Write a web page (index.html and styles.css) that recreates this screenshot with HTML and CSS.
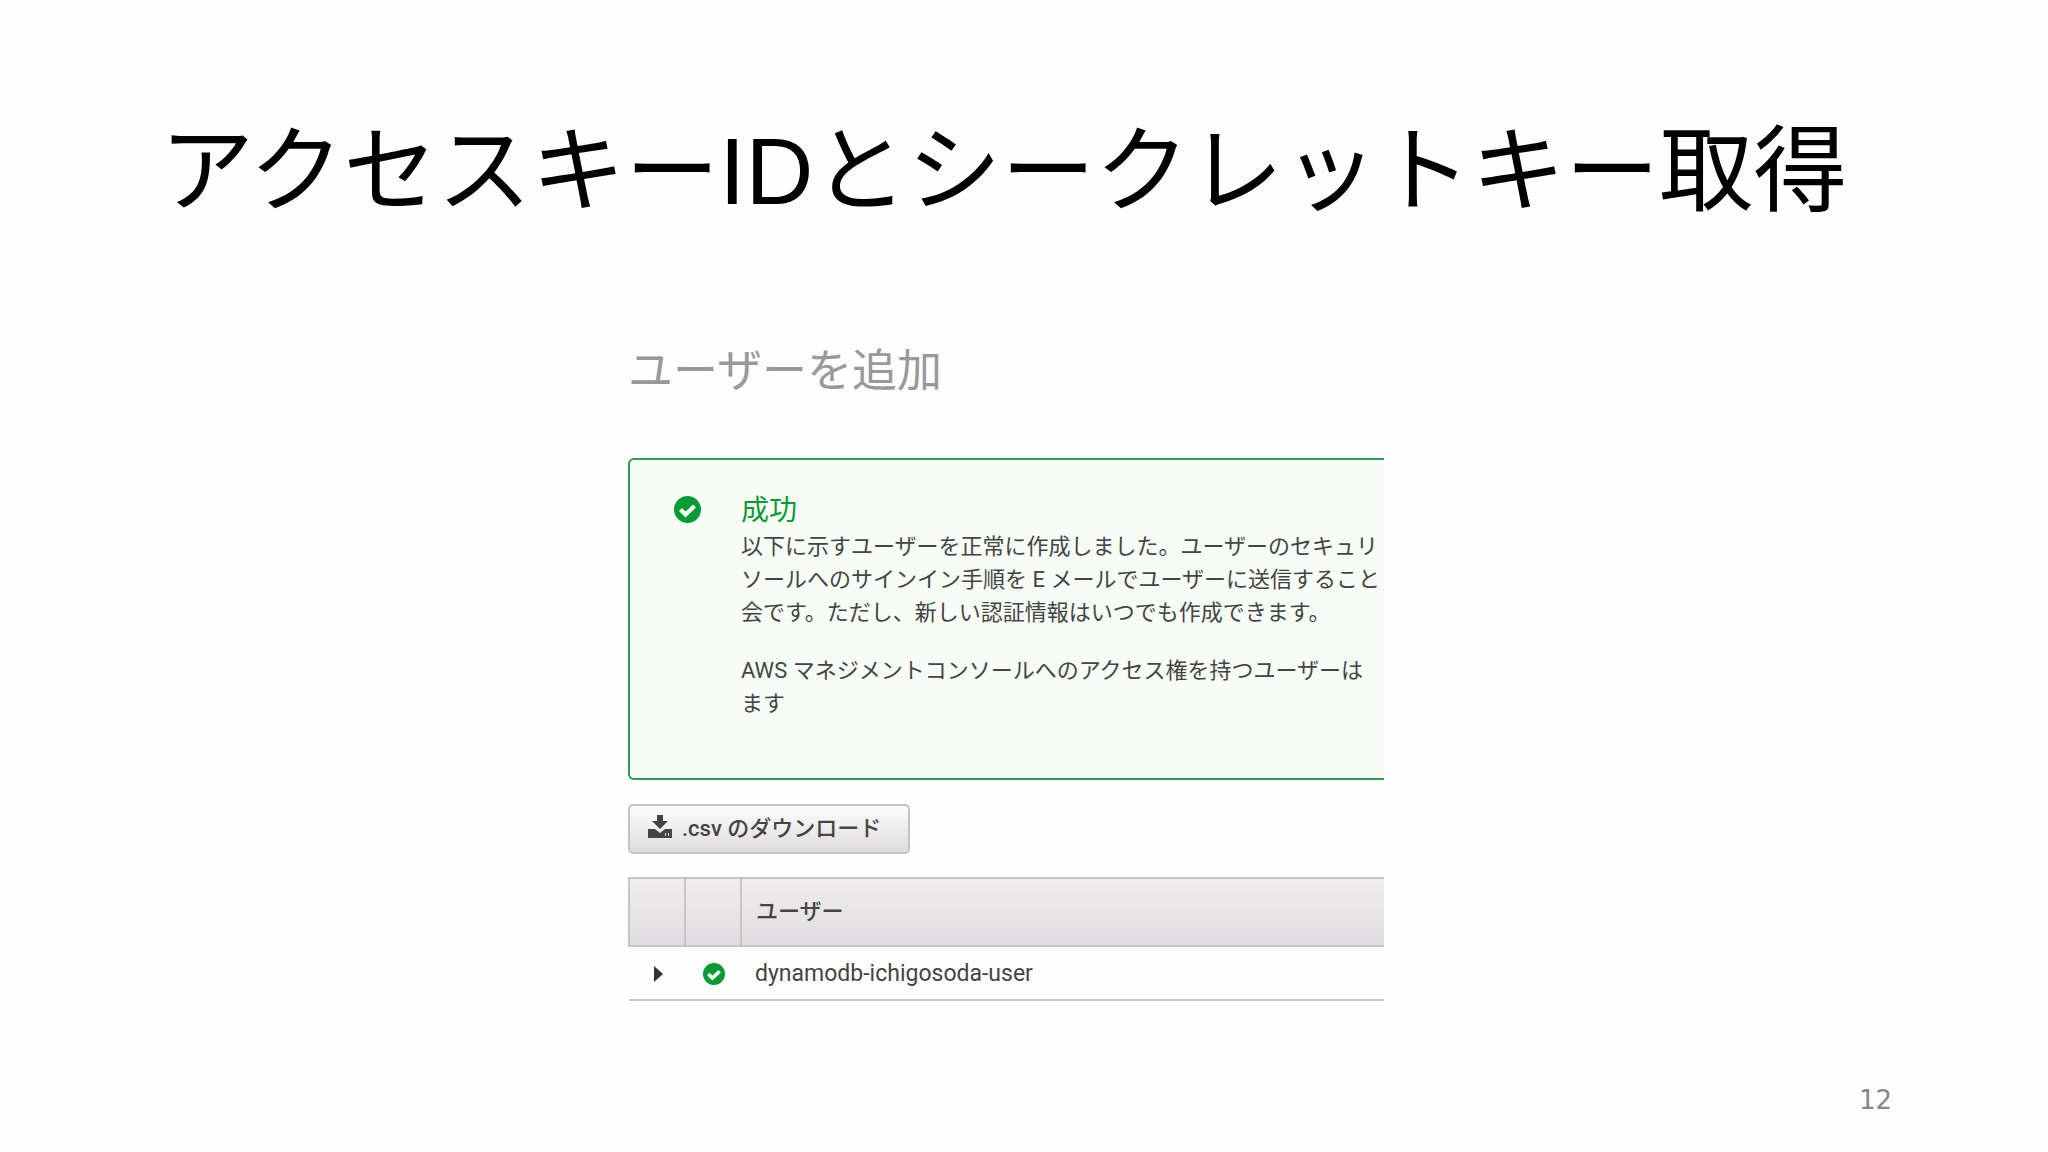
FILE: index.html
```html
<!DOCTYPE html>
<html lang="ja">
<head>
    <meta charset="UTF-8">
    <title>アクセスキーIDとシークレットキー取得</title>
    <link rel="stylesheet" href="styles.css">
</head>
<body>
    <h1>アクセスキーIDとシークレットキー取得</h1>
    <main class="content">
        <div class="capture">
            <h2>ユーザーを追加</h2>
            <section class="alert">
                <svg class="alertIcon" viewBox="0 0 27 27" aria-hidden="true">
                    <circle cx="13.5" cy="13.5" r="13.5" fill="#079b35"/>
                    <path d="M6.5 13.5l5 5L20.5 10" fill="none" stroke="#fff" stroke-width="4.2"/>
                </svg>
                <div class="alertText">
                    <h3>成功</h3>
                    <p>以下に示すユーザーを正常に作成しました。ユーザーのセキュリ<br>ソールへのサインイン手順を E メールでユーザーに送信すること<br>会です。ただし、新しい認証情報はいつでも作成できます。</p>
                    <p>AWS マネジメントコンソールへのアクセス権を持つユーザーは<br>ます</p>
                </div>
            </section>
            <button type="button" class="download">
                <svg class="downloadIcon" viewBox="0 0 24 23" aria-hidden="true">
                    <path d="M9 0h6v6h5l-8 8-8-8h5z" fill="#444"/>
                    <path d="M0 14h7l5 4 5-4h7v9H0z" fill="#444"/>
                    <path d="M17 18h1v3h-1zM20 18h1v3h-1z" fill="#ddd"/>
                </svg>
                <span>.csv のダウンロード</span>
            </button>
            <table class="users">
                <thead>
                    <tr>
                        <th class="toggle"></th>
                        <th class="status"></th>
                        <th>ユーザー</th>
                    </tr>
                </thead>
                <tbody>
                    <tr>
                        <td class="toggle">
                            <svg class="arrow" viewBox="0 0 9 16" aria-hidden="true"><path d="M0 0l9 8-9 8z" fill="#333"/></svg>
                        </td>
                        <td class="status">
                            <svg class="statusIcon" viewBox="0 0 27 27" aria-hidden="true">
                                <circle cx="13.5" cy="13.5" r="13.5" fill="#079b35"/>
                                <path d="M6.5 13.5l5 5L20.5 10" fill="none" stroke="#fff" stroke-width="4.2"/>
                            </svg>
                        </td>
                        <td>dynamodb-ichigosoda-user</td>
                    </tr>
                </tbody>
            </table>
        </div>
    </main>
    <footer>12</footer>
</body>
</html>
```

FILE: styles.css
```css
* {
    box-sizing: border-box;
}
body {
    margin: 0;
    min-height: 100vh;
    display: flex;
    flex-direction: column;
    background: #fefefe;
    color: #444;
    font-family: Roboto, "Noto Sans CJK JP", sans-serif;
    overflow: hidden;
}
h1, h2, h3, p {
    margin: 0;
    font-weight: normal;
}
h1 {
    padding: 104px 0 0 160px;
    font-family: "Liberation Sans", "Noto Sans CJK JP", sans-serif;
    font-size: 94px;
    line-height: 136px;
    color: #000;
    white-space: nowrap;
}
/* the capture sits a little left of the middle */
.content {
    display: grid;
    grid-template-columns: 628fr 756fr 664fr;
    padding-top: 100px;
}
.capture {
    grid-column: 2;
    min-width: 0;
    overflow: hidden;
}
h2 {
    font-size: 45px;
    line-height: 64px;
    color: #999;
    white-space: nowrap;
}
.alert {
    display: flex;
    margin-top: 54px;
    padding: 32px 0 58px 44px;
    border: 2px solid #2a9e55;
    border-right: 0;
    border-radius: 6px 0 0 6px;
    background: #f7fdf6;
}
.alertIcon {
    flex: none;
    width: 27px;
    height: 27px;
    margin-top: 4px;
}
.alertText {
    margin-left: 40px;
    font-size: 22px;
    line-height: 33px;
    white-space: nowrap;
}
.alertText h3 {
    font-size: 28px;
    line-height: 38px;
    color: #079b35;
}
.alertText p + p {
    margin-top: 25px;
}
.download {
    display: flex;
    align-items: center;
    gap: 10px;
    height: 50px;
    margin: 24px 0 23px;
    padding: 0 27px 6px 18px;
    border: 2px solid #c4c2c3;
    border-radius: 5px;
    background: linear-gradient(#fdfcfd, #dedcdd);
    color: #444;
    font-family: inherit;
    font-size: 22px;
    font-weight: 500;
}
.downloadIcon {
    width: 24px;
    height: 23px;
}
.users {
    width: 100%;
    border-collapse: collapse;
    table-layout: fixed;
    font-size: 23px;
}
.users th {
    height: 68px;
    padding: 0 0 6px 14px;
    border: 2px solid #c6c4c5;
    border-right: 0;
    background: linear-gradient(#efedee, #dfdddf);
    font-size: 22px;
    font-weight: 500;
    text-align: left;
}
.users td {
    height: 54px;
    padding: 0 0 0 14px;
    border-bottom: 2px solid #ccc;
}
.users .toggle, .users .status {
    width: 56px;
    padding: 0 0 0 2px;
    text-align: center;
}
.arrow {
    width: 9px;
    height: 16px;
    vertical-align: middle;
}
.statusIcon {
    width: 22px;
    height: 22px;
    vertical-align: middle;
}
footer {
    margin-top: auto;
    padding: 0 156px 36px 0;
    font-family: "DejaVu Sans", sans-serif;
    font-size: 26px;
    line-height: 32px;
    text-align: right;
    color: #888;
}
```
